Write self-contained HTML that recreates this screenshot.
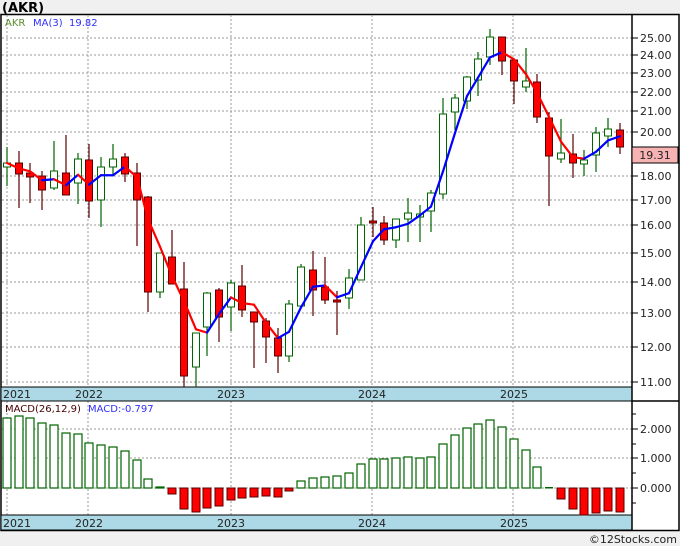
<!DOCTYPE html>
<html><head><meta charset="utf-8"><style>
html,body{margin:0;padding:0;background:#f0f0f0;width:680px;height:546px;overflow:hidden}
svg{display:block;font-family:"DejaVu Sans","Liberation Sans",sans-serif}
</style></head><body>
<svg id="s" width="680" height="546" viewBox="0 0 680 546">
<rect x="0" y="0" width="680" height="546" fill="#f0f0f0"/>
<text x="2" y="12" font-size="13" font-weight="bold" fill="#000">(AKR)</text>
<rect x="1" y="14.5" width="678" height="516" fill="#fff" stroke="#000" stroke-width="1.5"/>
<g id="grid" stroke="#999" stroke-width="1" stroke-dasharray="2,2"></g>
<rect x="1" y="387" width="631" height="14" fill="#add8e6" stroke="#000" stroke-width="1"/>
<rect x="1" y="515" width="631" height="15" fill="#add8e6" stroke="#000" stroke-width="1"/>
<line x1="632" y1="14" x2="632" y2="530" stroke="#000" stroke-width="1.5"/>
<line x1="632" y1="401" x2="679" y2="401" stroke="#000" stroke-width="1.5"/>
<g font-size="11" fill="#222">
<text x="3" y="398">2021</text><text x="75" y="398">2022</text><text x="217" y="398">2023</text><text x="358" y="398">2024</text><text x="500" y="398">2025</text>
<text x="3" y="527">2021</text><text x="75" y="527">2022</text><text x="217" y="527">2023</text><text x="358" y="527">2024</text><text x="500" y="527">2025</text>
</g>
<g id="plot"></g>
<g font-size="10">
<text x="5" y="26" fill="#5a8a2a">AKR</text><text x="33" y="26" fill="#3030ff">MA(3)</text><text x="69" y="26" fill="#3030ff">19.82</text>
<text x="5" y="412" fill="#400">MACD(26,12,9)</text><text x="88" y="412" fill="#3030ff">MACD:-0.797</text>
</g>
<g id="ax" font-size="11" fill="#222"></g>
<rect x="632" y="147" width="46" height="16" fill="#f7b3b3" stroke="#000" stroke-width="1"/>
<text x="655" y="159" font-size="11" fill="#222" text-anchor="middle">19.31</text>
<text x="677" y="543" font-size="11" fill="#222" text-anchor="end">©12Stocks.com</text>
</svg>
<script>
var NS="http://www.w3.org/2000/svg";
function el(p,t,a){var e=document.createElementNS(NS,t);for(var k in a)e.setAttribute(k,a[k]);p.appendChild(e);return e;}
var grid=document.getElementById('grid'),plot=document.getElementById('plot'),ax=document.getElementById('ax');
var lv=[[25,38],[24,55],[23,73],[22,92],[21,111],[20,132],[18,176],[17,200],[16,225],[15,253],[14,282],[13,313],[12,347],[11,382]];
lv.forEach(function(l){el(grid,'line',{x1:2,y1:l[1],x2:632,y2:l[1]});el(ax,'line',{x1:632,y1:l[1],x2:638,y2:l[1],stroke:'#000'});var t=el(ax,'text',{x:640,y:l[1]+4});t.textContent=l[0].toFixed(2);});
[7,88,231,372,513].forEach(function(x){el(grid,'line',{x1:x,y1:15,x2:x,y2:387});el(grid,'line',{x1:x,y1:401,x2:x,y2:515});});
[[429,'2.000'],[458,'1.000'],[488,'0.000']].forEach(function(m){el(grid,'line',{x1:2,y1:m[0],x2:632,y2:m[0]});el(ax,'line',{x1:632,y1:m[0],x2:638,y2:m[0],stroke:'#000'});var t=el(ax,'text',{x:640,y:m[0]+4});t.textContent=m[1];});
[414,444,473,503].forEach(function(y){el(ax,'line',{x1:632,y1:y,x2:636,y2:y,stroke:'#000'});});
// [x, bodyTop, bodyBot, high, low, green?]
var C=[[7,163,167,147,186,1],[19,163,174,151,208,0],[30,173,177,163,203,0],[42,176,190,171,210,0],[54,171,188,141,190,1],[66,173,195,135,195,0],[78,159,183,153,204,1],[89,160,201,144,218,0],[101,167,200,157,227,1],[113,159,167,144,175,1],[125,157,174,153,182,0],[137,173,200,163,246,0],[148,197,292,196,312,0],[160,253,292,253,298,1],[172,257,284,230,284,0],[184,289,376,262,387,0],[196,333,367,333,387,1],[207,293,327,292,356,1],[219,290,317,288,342,0],[231,283,307,280,331,1],[242,286,310,265,317,0],[254,312,322,312,368,0],[266,321,337,318,363,0],[278,338,356,328,373,0],[289,304,356,300,362,1],[301,267,306,264,306,1],[313,270,290,251,316,0],[325,287,300,257,304,0],[337,300,302,291,335,0],[349,278,298,269,309,1],[361,225,280,217,280,1],[373,221,223,207,237,0],[384,223,240,216,245,0],[396,219,240,219,248,1],[408,213,219,198,242,1],[420,214,217,205,242,1],[431,193,211,190,232,1],[443,114,194,98,199,1],[455,98,112,94,130,1],[467,77,101,76,109,1],[478,59,80,52,96,1],[490,37,57,29,65,1],[502,37,61,37,75,0],[514,60,81,60,104,0],[526,81,87,48,92,1],[537,82,117,74,123,0],[549,118,156,112,206,0],[561,153,159,119,163,1],[573,154,163,134,178,0],[584,160,164,150,176,1],[596,133,155,127,172,1],[608,129,136,118,147,1],[620,130,147,123,154,0]];
var A=1387,B=419;function yp(y){return Math.exp((A-y)/B);}function py(p){return A-B*Math.log(p);}
C.forEach(function(c){var col=c[5]?'#006400':'#5a0000';
el(plot,'line',{x1:c[0],y1:c[3],x2:c[0],y2:c[4],stroke:col,'stroke-width':1.2});
el(plot,'rect',{x:c[0]-3.5,y:c[1],width:7,height:Math.max(1,c[2]-c[1]),fill:c[5]?'#fff':'#ff0000',stroke:col,'stroke-width':1});});
var cl=C.map(function(c){return yp(c[5]?c[1]:c[2]);});
var ma=[];for(var i=0;i<C.length;i++){var s=0,n=0;for(var j=Math.max(0,i-2);j<=i;j++){s+=cl[j];n++;}ma.push(py(s/n));}
for(var i=1;i<C.length;i++){el(plot,'line',{x1:C[i-1][0],y1:ma[i-1],x2:C[i][0],y2:ma[i],stroke:ma[i]<=ma[i-1]?'#0000ff':'#ff0000','stroke-width':2.2,'stroke-linecap':'round'});}
var M=[418,416,418,423,425,433,434,443,445,447,451,460,479,487,494,509,512,508,506,500,498,497,496,497,491,481,478,477,476,473,464,459,459,458,457,458,457,444,435,428,424,420,427,439,450,467,487,499,509,515,513,511,512];
M.forEach(function(m,i){var x=C[i][0];
if(i==46){el(plot,'rect',{x:x-4,y:487,width:8,height:1.5,fill:'#006400'});return;}
if(m<488)el(plot,'rect',{x:x-4,y:m,width:8,height:488-m,fill:'#fff',stroke:'#006400','stroke-width':1.2});
else el(plot,'rect',{x:x-4,y:488,width:8,height:m-488,fill:'#ff0000',stroke:'#5a0000','stroke-width':1});});
</script>
</body></html>
